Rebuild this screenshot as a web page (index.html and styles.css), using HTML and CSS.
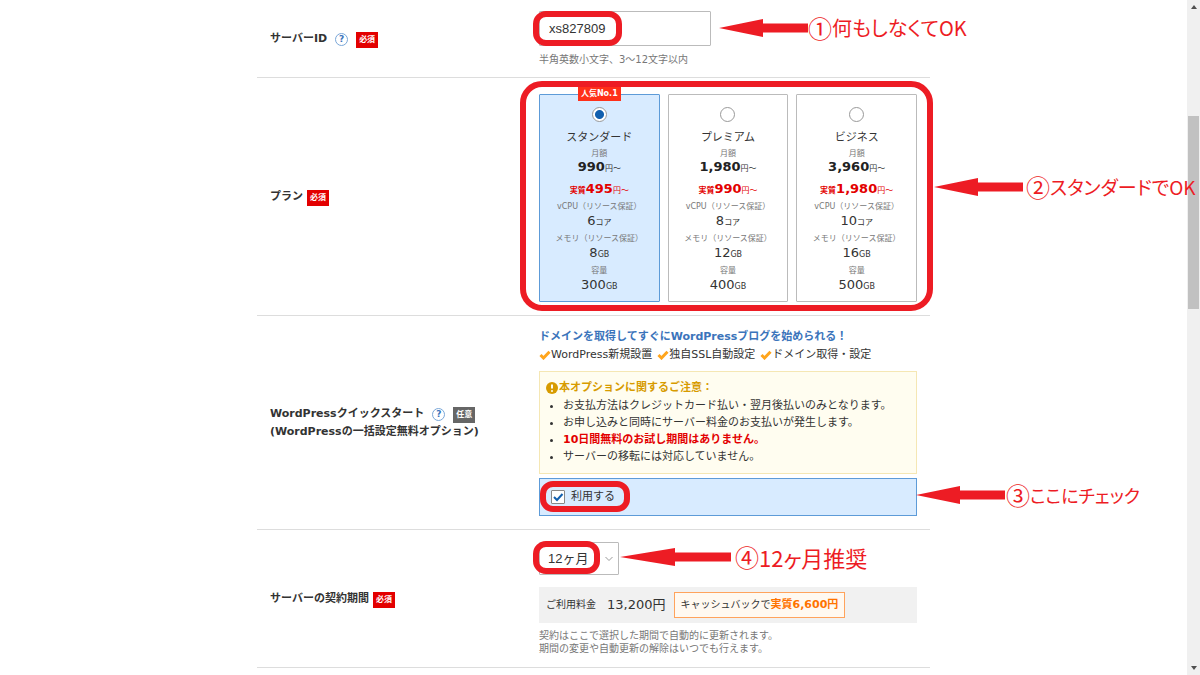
FILE: index.html
```html
<!DOCTYPE html>
<html lang="ja">
<head>
<meta charset="utf-8">
<meta name="viewport" content="width=device-width, initial-scale=1">
<title>サーバーお申し込み</title>
<link rel="stylesheet" href="styles.css">
</head>
<body>
<div class="page">
<main class="main">
<form class="form">
  <section class="row">
    <div class="head">
      <label for="server-id">サーバーID</label>
      <button class="help" type="button" aria-label="ヘルプ">?</button>
      <span class="tag">必須</span>
    </div>
    <div class="field field-id">
      <input class="text-input" id="server-id" type="text" value="xs827809">
      <p class="hint">半角英数小文字、3～12文字以内</p>
      <span class="ring ring-id"></span>
      <div class="callout callout-id">
        <svg class="arrow" viewBox="0 0 89 20"><path d="M0 10 44 1V5.500H89V14.500H44V19Z"/></svg>
        <span class="callout-text"><span class="num">①</span>何もしなくてOK</span>
      </div>
    </div>
  </section>

  <section class="row">
    <div class="head"><span>プラン</span><span class="tag">必須</span></div>
    <div class="field field-plan">
      <div class="plans">
        <label class="plan plan-selected">
          <span class="popular">人気No.1</span>
          <input class="radio" type="radio" name="plan" checked>
          <span class="plan-name">スタンダード</span>
          <span class="caption">月額</span>
          <span class="price"><b>990</b><small>円～</small></span>
          <span class="net"><small class="net-mark">実質</small><b>495</b><small>円～</small></span>
          <span class="spec">vCPU（リソース保証）</span><span class="value">6<small>コア</small></span>
          <span class="spec">メモリ（リソース保証）</span><span class="value">8<small>GB</small></span>
          <span class="spec">容量</span><span class="value">300<small>GB</small></span>
        </label>
        <label class="plan">
          <input class="radio" type="radio" name="plan">
          <span class="plan-name">プレミアム</span>
          <span class="caption">月額</span>
          <span class="price"><b>1,980</b><small>円～</small></span>
          <span class="net"><small class="net-mark">実質</small><b>990</b><small>円～</small></span>
          <span class="spec">vCPU（リソース保証）</span><span class="value">8<small>コア</small></span>
          <span class="spec">メモリ（リソース保証）</span><span class="value">12<small>GB</small></span>
          <span class="spec">容量</span><span class="value">400<small>GB</small></span>
        </label>
        <label class="plan">
          <input class="radio" type="radio" name="plan">
          <span class="plan-name">ビジネス</span>
          <span class="caption">月額</span>
          <span class="price"><b>3,960</b><small>円～</small></span>
          <span class="net"><small class="net-mark">実質</small><b>1,980</b><small>円～</small></span>
          <span class="spec">vCPU（リソース保証）</span><span class="value">10<small>コア</small></span>
          <span class="spec">メモリ（リソース保証）</span><span class="value">16<small>GB</small></span>
          <span class="spec">容量</span><span class="value">500<small>GB</small></span>
        </label>
      </div>
      <span class="ring ring-plan"></span>
      <div class="callout callout-plan">
        <svg class="arrow" viewBox="0 0 89 20"><path d="M0 10 44 1V5.500H89V14.500H44V19Z"/></svg>
        <span class="callout-text"><span class="num">②</span>スタンダードでOK</span>
      </div>
    </div>
  </section>

  <section class="row">
    <div class="head">
      <span>WordPressクイックスタート</span>
      <button class="help" type="button" aria-label="ヘルプ">?</button>
      <span class="tag tag-optional">任意</span>
      <span class="head-sub">(WordPressの一括設定無料オプション)</span>
    </div>
    <div class="field field-wp">
      <p class="lead">ドメインを取得してすぐにWordPressブログを始められる！</p>
      <ul class="merits">
        <li><svg class="tick" viewBox="0 0 12 10"><path d="M1.500 5 4.500 8 10.500 1.800"/></svg>WordPress新規設置</li>
        <li><svg class="tick" viewBox="0 0 12 10"><path d="M1.500 5 4.500 8 10.500 1.800"/></svg>独自SSL自動設定</li>
        <li><svg class="tick" viewBox="0 0 12 10"><path d="M1.500 5 4.500 8 10.500 1.800"/></svg>ドメイン取得・設定</li>
      </ul>
      <div class="notice">
        <p class="notice-title"><svg class="alert" viewBox="0 0 12 12"><circle cx="6" cy="6" r="6"/><path d="M6 2.500V6.500M6 8.300V9.800"/></svg>本オプションに関するご注意：</p>
        <ul class="notice-list">
          <li>お支払方法はクレジットカード払い・翌月後払いのみとなります。</li>
          <li>お申し込みと同時にサーバー料金のお支払いが発生します。</li>
          <li><strong>10日間無料のお試し期間はありません。</strong></li>
          <li>サーバーの移転には対応していません。</li>
        </ul>
      </div>
      <div class="use">
        <label class="use-label">
          <span class="check"><input class="checkbox" type="checkbox" checked><svg class="check-mark" viewBox="0 0 14 14"><path d="M3 7 6 10 11.500 4"/></svg></span>
          利用する
        </label>
        <span class="ring ring-use"></span>
        <div class="callout callout-use">
          <svg class="arrow" viewBox="0 0 89 20"><path d="M0 10 44 1V5.500H89V14.500H44V19Z"/></svg>
          <span class="callout-text"><span class="num">③</span>ここにチェック</span>
        </div>
      </div>
    </div>
  </section>

  <section class="row">
    <div class="head"><label for="term">サーバーの契約期間</label><span class="tag">必須</span></div>
    <div class="field field-term">
      <div class="select-wrap">
        <select class="select" id="term"><option>12ヶ月</option></select>
        <svg class="chevron" viewBox="0 0 8 6"><path d="M.500 1 4 4.500 7.500 1"/></svg>
        <span class="ring ring-term"></span>
        <div class="callout callout-term">
          <svg class="arrow arrow-long" viewBox="0 0 111 20"><path d="M0 10 55 1V5.500H111V14.500H55V19Z"/></svg>
          <span class="callout-text"><span class="num">④</span>12ヶ月推奨</span>
        </div>
      </div>
      <div class="fee">
        <span class="fee-label">ご利用料金</span>
        <span class="fee-price">13,200円</span>
        <span class="cashback">キャッシュバックで<strong>実質6,600円</strong></span>
      </div>
      <p class="hint term-note">契約はここで選択した期間で自動的に更新されます。<br>期間の変更や自動更新の解除はいつでも行えます。</p>
    </div>
  </section>
</form>
</main>
<div class="scrollbar">
  <svg class="scroll-arrow" viewBox="0 0 6 4"><path d="M0 4 3 0 6 4Z"/></svg>
  <div class="track"><div class="thumb"></div></div>
  <svg class="scroll-arrow" viewBox="0 0 6 4"><path d="M0 0 3 4 6 0Z"/></svg>
</div>
</div>
</body>
</html>
```
FILE: styles.css
```css
* { box-sizing: border-box; }

body {
  margin: 0;
  background: #fff;
  color: #333;
  font-family: "DejaVu Sans", "Noto Sans CJK JP", sans-serif;
  font-size: 11px;
  line-height: 18px;
}

p, ul { margin: 0; padding: 0; }

.page { display: flex; min-height: 100vh; }
.main { flex: 1; min-width: 0; }
.form { max-width: 673px; margin: 0 auto; }

.row {
  display: grid;
  grid-template-columns: 282px 1fr;
  border-bottom: 1px solid #ddd;
}

.head {
  display: flex;
  flex-wrap: wrap;
  align-items: center;
  align-content: center;
  padding-left: 13px;
  font-weight: bold;
}
.head-sub { flex-basis: 100%; }

.help {
  width: 13px;
  height: 13px;
  margin: 2px 4px 0 8px;
  padding: 0;
  border: 1px solid #7aa7d8;
  border-radius: 50%;
  background: #fff;
  color: #3b74bb;
  font: bold 9px/11px "DejaVu Sans", sans-serif;
}

.tag {
  margin: 2px 0 0 4px;
  padding: 0 3px;
  background: #e30000;
  color: #fff;
  font-size: 8px;
  line-height: 16px;
}
.tag-optional { background: #666; }

.field { position: relative; padding-right: 13px; }
.field-id { padding-top: 11px; padding-bottom: 11px; }
.field-plan { padding-top: 16px; padding-bottom: 13px; }
.field-wp { padding-top: 12px; padding-bottom: 13px; }
.field-term { padding-top: 12px; padding-bottom: 12px; }

.text-input {
  display: block;
  width: 172px;
  height: 35px;
  padding: 0 9px;
  border: 1px solid #bbb;
  border-radius: 1px;
  background: #fff;
  color: #333;
  font: 13px "Liberation Sans", sans-serif;
}

.hint { color: #777; font-size: 10px; line-height: 13px; }
.field-id .hint { margin-top: 7px; }

/* Plan cards */
.plans { display: grid; grid-template-columns: repeat(3, 1fr); gap: 8px; }
.plan {
  position: relative;
  display: flex;
  flex-direction: column;
  align-items: center;
  padding: 12px 0 9px;
  border: 1px solid #bbb;
  border-radius: 1px;
  white-space: nowrap;
}
.plan-selected { border-color: #5d9bd8; background: #d8ebff; }
.popular {
  position: absolute;
  top: -8px;
  padding: 0 3px;
  background: #ff3019;
  color: #fff;
  font-size: 8px;
  font-weight: bold;
  line-height: 14px;
}
.radio {
  appearance: none;
  width: 15px;
  height: 15px;
  margin: 0;
  border: 1px solid #999;
  border-radius: 50%;
  background: #fff;
}
.radio:checked { background: radial-gradient(circle, #115fae 4px, #fff 5px); }
.plan-name { margin-top: 8px; line-height: 16px; }
.caption { margin-top: 1px; color: #777; font-size: 8px; line-height: 13px; }
.price, .net, .value { font-size: 13px; line-height: 14px; }
.price b { color: #222; }
.net { margin-top: 8px; color: #e30000; }
.plan small { font-size: 8px; line-height: 0; }
.plan .net-mark { font-weight: bold; }
.spec { margin-top: 4px; color: #777; font-size: 8px; line-height: 14px; }

/* WordPress option */
.lead { color: #3b74bb; font-weight: bold; }
.merits { display: flex; gap: 5px; list-style: none; }
.merits li { display: flex; align-items: center; }
.tick { width: 12px; height: 10px; fill: none; stroke: #ffa51c; stroke-width: 3; }

.notice {
  margin-top: 7px;
  padding: 7px 6px 8px;
  border: 1px solid #f5e7b4;
  background: #fffdf0;
}
.notice-title { display: flex; align-items: center; color: #d79b00; font-weight: bold; }
.alert { width: 12px; height: 12px; margin-right: 1px; fill: #d79b00; stroke: #fffdf0; }
.alert circle { stroke: none; }
.alert path { stroke-width: 2; }
.notice-list { padding-left: 17px; line-height: 17px; }
.notice-list strong { color: #e30000; }

.use {
  position: relative;
  display: flex;
  align-items: center;
  height: 38px;
  margin-top: 4px;
  padding-left: 11px;
  border: 1px solid #5d9bd8;
  background: #d8ebff;
}
.use-label { display: flex; align-items: center; gap: 6px; }
.check { display: grid; }
.check > * { grid-area: 1 / 1; width: 14px; height: 14px; margin: 0; }
.checkbox { appearance: none; border: 1px solid #888; border-radius: 1px; background: #fff; }
.check-mark { fill: none; stroke: #115fae; stroke-width: 2; pointer-events: none; }

/* Contract term */
.select-wrap { position: relative; width: 80px; }
.select {
  display: block;
  appearance: none;
  width: 100%;
  height: 33px;
  padding: 0 8px;
  border: 1px solid #bbb;
  border-radius: 1px;
  background: #fff;
  color: #333;
  font: 13px "Liberation Sans", "Noto Sans CJK JP", sans-serif;
}
.chevron {
  position: absolute;
  top: 14px;
  right: 6px;
  width: 8px;
  height: 6px;
  fill: none;
  stroke: #999;
}
.fee {
  display: flex;
  align-items: center;
  margin-top: 12px;
  padding: 5px 7px;
  background: #f1f1f1;
}
.fee-label { font-size: 10px; }
.fee-price { margin: 0 8px 0 11px; font-size: 13px; }
.cashback {
  padding: 3px 6px;
  border: 1px solid #ffa35c;
  background: #fff9f1;
  font-size: 10px;
}
.cashback strong { color: #ff7300; font-size: 11px; }
.term-note { margin-top: 6px; }

/* Red guide marks laid over the form */
.ring {
  position: absolute;
  border: 6px solid #ed1c24;
  border-radius: 13px;
  pointer-events: none;
}
.ring-id { top: 11px; left: -6px; width: 89px; height: 35px; }
.ring-plan { top: 3px; left: -19px; right: -3px; bottom: 4px; border-radius: 22px; }
.ring-use { top: 2px; left: 0; width: 90px; height: 31px; }
.ring-term { top: -1px; left: -6px; width: 67px; height: 33px; }

.callout {
  position: absolute;
  display: flex;
  align-items: center;
  height: 30px;
  color: #ed1c24;
  font-family: "Noto Sans CJK JP", sans-serif;
  white-space: nowrap;
  pointer-events: none;
}
.callout-id { top: 13px; left: 180px; }
.callout-plan { top: 94px; left: 100%; gap: 3px; margin-left: 4px; z-index: 1; }
.callout-use { top: 1px; left: 100%; gap: 1px; }
.callout-term { top: 0; left: 81px; gap: 4px; }
.arrow { width: 89px; height: 20px; fill: #ed1c24; }
.arrow-long { width: 111px; }
.callout-text {
  display: flex;
  align-items: center;
  font-size: 20px;
  line-height: 30px;
  font-feature-settings: "palt";
}
.callout-plan .callout-text { font-size: 19px; }
.callout-use .callout-text { font-size: 18px; }
.callout-term .callout-text { font-size: 22px; }
.callout-text .num { font-size: 24px; }

/* Window scroll bar */
.scrollbar {
  display: flex;
  flex-direction: column;
  align-items: center;
  width: 13px;
  padding: 5px 1px;
  background: #f0f0f0;
}
.scroll-arrow { width: 6px; height: 4px; fill: #505050; }
.track { flex: 1; width: 100%; padding-top: 107px; }
.thumb { height: 193px; background: #c1c1c1; }
```
